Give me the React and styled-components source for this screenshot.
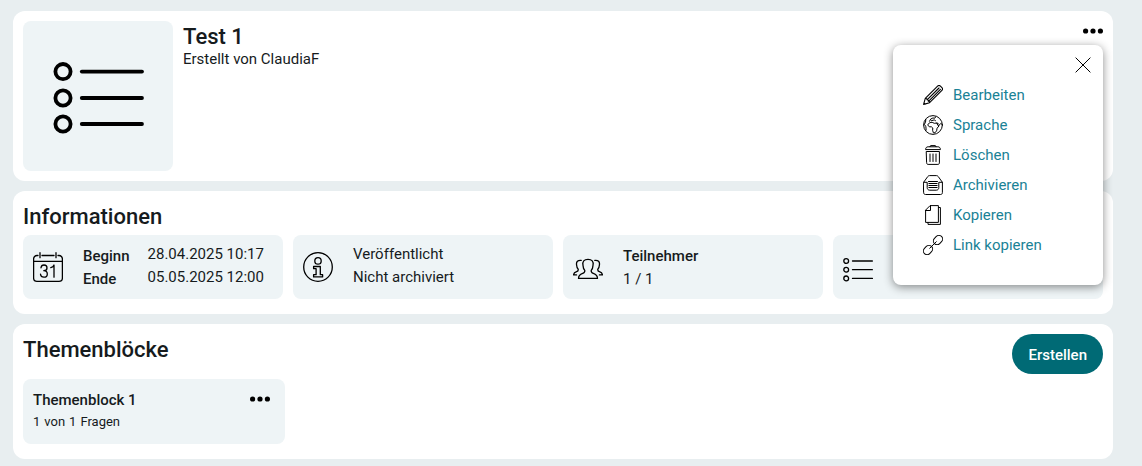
import styled, { createGlobalStyle } from "styled-components";

const GlobalStyle = createGlobalStyle`
  * {
    box-sizing: border-box;
  }

  body {
    margin: 0;
    background: #e8eef0;
    color: #161b1d;
    font-family: Roboto, "Liberation Sans", sans-serif;
    font-size: 15px;
    line-height: 23px;
  }

  svg {
    display: block;
    flex-shrink: 0;
    color: #000;
  }
`;

const Page = styled.main`
  display: flex;
  flex-direction: column;
  gap: 10px;
  padding: 11px 29px 7px 13px;
`;

const Card = styled.section`
  position: relative;
  display: flex;
  flex-direction: ${({ $column }) => ($column ? "column" : "row")};
  gap: ${({ $gap }) => $gap || 0}px;
  padding: 10px 10px ${({ $bottom }) => $bottom || 10}px;
  border-radius: 12px;
  background: #fff;
`;

const Tile = styled.div`
  display: flex;
  border-radius: 8px;
  background: #eef4f6;
`;

const Cover = styled(Tile)`
  width: 150px;
  height: 150px;
`;

const Heading = styled.div`
  flex: 1;
`;

const Title = styled.h1`
  margin: 0;
  font-size: 22px;
  font-weight: 500;
  line-height: 32px;
`;

const Author = styled.p`
  margin: 0;
  line-height: 12px;
`;

const SectionTitle = styled.h2`
  margin: 0;
  font-size: 22px;
  font-weight: 500;
  line-height: 32px;
`;

const IconButton = styled.button`
  display: flex;
  align-self: flex-start;
  padding: 0;
  border: 0;
  background: none;
  cursor: pointer;
`;

const Menu = styled.nav`
  position: absolute;
  z-index: 1;
  top: 34px;
  right: 10px;
  display: flex;
  flex-direction: column;
  width: 210px;
  padding: 12px 12px 25px;
  border-radius: 8px;
  background: #fff;
  box-shadow: 0 2px 10px rgba(0, 0, 0, 0.45);

  ${IconButton} {
    align-self: flex-end;
  }
`;

const MenuList = styled.ul`
  margin: 7px 0 0;
  padding: 0 18px;
  list-style: none;
`;

const MenuLink = styled.a`
  display: flex;
  align-items: center;
  gap: 10px;
  height: 30px;
  color: #1a8296;
  text-decoration: none;
`;

const InfoRow = styled.div`
  display: flex;
  gap: 10px;
`;

const InfoTile = styled(Tile)`
  flex: ${({ $grow }) => ($grow ? "1" : "0 0 260px")};
  align-items: center;
  gap: 20px;
  height: 64px;
  padding: 0 10px;
`;

const Columns = styled.div`
  display: flex;
  gap: 18px;
`;

const Lines = styled.div`
  display: flex;
  flex-direction: column;
  padding: ${({ $raised }) => ($raised ? "0 0 2px" : "2px 0 0")};
`;

const Label = styled.span`
  font-weight: 500;
`;

const SectionHead = styled.div`
  display: flex;
  align-items: flex-start;
  justify-content: space-between;
`;

const CreateButton = styled.button`
  height: 40px;
  padding: 2px 16px 0;
  border: 0;
  border-radius: 20px;
  background: #006a75;
  color: #fff;
  font-family: inherit;
  font-size: 15px;
  font-weight: 500;
  cursor: pointer;
`;

const BlockTile = styled(Tile)`
  justify-content: space-between;
  width: 262px;
  height: 65px;
  padding: 10px 15px 10px 10px;

  ${IconButton} {
    margin-top: 7px;
  }
`;

const BlockTitle = styled.h3`
  margin: 0;
  font-size: 15px;
  font-weight: 500;
  line-height: 22px;
`;

const BlockMeta = styled.p`
  display: flex;
  gap: 4px;
  margin: 0;
  font-size: 13px;
  line-height: 22px;
`;

const Icon = ({ size = 20, stroke = 1, children }) => (
  <svg
    width={size}
    height={size}
    viewBox={`0 0 ${size} ${size}`}
    fill="none"
    stroke="currentColor"
    strokeWidth={stroke}
    strokeLinecap="round"
    strokeLinejoin="round"
    aria-hidden="true"
  >
    {children}
  </svg>
);

const DotsIcon = ({ height = 6 }) => (
  <svg
    width="20"
    height={height}
    viewBox={`0 0 20 ${height}`}
    fill="currentColor"
    aria-hidden="true"
  >
    {[2.6, 10, 17.4].map((x) => (
      <circle key={x} cx={x} cy={height / 2} r="2.6" />
    ))}
  </svg>
);

const CoverIcon = () => (
  <Icon size={150} stroke={3.8}>
    {[50.6, 77, 103].map((y) => (
      <g key={y}>
        <circle cx="40" cy={y} r="7.6" />
        <path d={`M58.8 ${y}H119`} />
      </g>
    ))}
  </Icon>
);

const ListIcon = () => (
  <Icon size={30} stroke={1.3}>
    {[9, 17.7, 26.4].map((y) => (
      <g key={y}>
        <circle cx="3.2" cy={y} r="2.4" />
        <path d={`M9.5 ${y}H29.4`} />
      </g>
    ))}
  </Icon>
);

const CalendarIcon = () => (
  <Icon size={30} stroke={1.3}>
    <path d="M5 3.5H4a3.4 3.4 0 0 0-3.4 3.4v19A3.4 3.4 0 0 0 4 29.3h22a3.4 3.4 0 0 0 3.4-3.4v-19A3.4 3.4 0 0 0 26 3.5h-1M9 3.5h12M7 .7v5M23 .7v5M.6 9.3h28.8" />
    <path d="M8 15.800c.2-1.800 1.400-2.800 3-2.800 1.800 0 3 1.100 3 2.900s-1.200 2.800-3.200 2.800c2.200 0 3.500 1.200 3.500 3.200s-1.400 3.300-3.400 3.300c-1.900 0-3.200-1.100-3.400-3M17.800 15.700c1.700-.5 2.700-1.300 3.200-2.700v12.200" />
  </Icon>
);

const InfoIcon = () => (
  <Icon size={30} stroke={1.3}>
    <circle cx="15" cy="15" r="14.3" />
    <circle cx="15" cy="8.9" r="3.2" />
    <path d="M10.600 14.500h6.700v8.200h2.300v2.200h-9v-2.200h2.500v-6h-2.500z" />
  </Icon>
);

const PeopleIcon = () => (
  <Icon size={30} stroke={1.3}>
    <path d="M5.500 26.400h19c0-3-1-4-4.200-5-1.600-.5-2.300-1.200-2.100-3 1.200-1.200 1.700-2.800 1.800-5 .9-4-1.200-6.100-5-6.100s-5.900 2.100-5 6.100c.1 2.200.6 3.800 1.800 5 .2 1.800-.5 2.500-2.100 3-3.200 1-4.200 2-4.200 5z" />
    <path d="M8.200 8.400C4.900 8 3 9.700 3.600 13c.1 1.900.6 3.200 1.600 4.200.2 1.500-.3 2.100-1.600 2.500C1.400 20.400.6 21 .6 22.900h3M21.800 8.400c3.300-.4 5.200 1.300 4.600 4.600-.1 1.900-.6 3.200-1.600 4.200-.2 1.500.3 2.100 1.600 2.500 2.200.7 3 1.300 3 3.200h-3" />
  </Icon>
);

const CloseIcon = () => (
  <Icon size={16}>
    <path d="M.9.9l14.200 14.200M15.100.9L.9 15.100" />
  </Icon>
);

const PencilIcon = () => (
  <Icon stroke={1.1}>
    <path d="M.6 19.400l1.700-6L14.600 1.100c.8-.8 2-.8 2.800 0l1.500 1.500c.8.8.8 2 0 2.800L6.600 17.700zM2.300 13.400c1.100-.2 1.800.5 1.700 1.400 1-.1 1.500.5 1.300 1.400.9-.1 1.400.5 1.300 1.500M4.800 14.200L16 3M6.200 15.600L17.400 4.400M.8 18l1.400 1.200" />
  </Icon>
);

const GlobeIcon = () => (
  <Icon>
    <circle cx="10" cy="10" r="9.4" />
    <path d="M5.600 8.600c.8-1 2-1.300 3.600-1.200l2.200.9 2.300-.3 1.300 2.600 1.200.1-2.100 2.500-.5 2.600-1.600 2h-1.600l-.8-2.500.2-2.300-1.400-1.200H6.300L5 10.300z" />
    <path d="M6.500 6.300l1.200-2.300 2.200-1 1.900.2.900-1.400M8.300 5.800l2.900-.9 1.300.8M13.700 8l1.300.3 1.400 1.500 1.400-1.200 1.400.8M2.800 4.500l-.3 2.800-1.100 2 1.500 2.400.2 3.400" />
  </Icon>
);

const TrashIcon = () => (
  <Icon>
    <path d="M3.600 6.500h12.800v11.400c0 .9-.6 1.500-1.500 1.500H5.100c-.9 0-1.500-.6-1.500-1.500zM2.600 4.200c0-1.500 1-2.400 2.500-2.400h9.800c1.500 0 2.500.9 2.500 2.400zM7 1.700L7.600.6h4.800l.6 1.100M7 9v7.500M10 9v7.500M13 9v7.500" />
  </Icon>
);

const ArchiveIcon = () => (
  <Icon>
    <path d="M.6 7.300L4.800 1.500c.5-.6 1-.9 1.800-.9h6.800c.8 0 1.300.3 1.800.9l4.200 5.800v10.300c0 1.200-.7 1.900-1.900 1.900h-15c-1.200 0-1.900-.7-1.900-1.900zM.6 7.300h3.600v5.300c0 1.500 1 2.600 2.500 2.600h6.600c1.500 0 2.500-1.100 2.500-2.600V7.300h3.600M5.500 6.500h9M5.900 8.500h8.200M5.900 10.500h8.200M5.900 12.500h8.200" />
  </Icon>
);

const CopyIcon = () => (
  <Icon>
    <path d="M7.500.6h7.900v16.800H2.600V5.500zM7.500.6v4.900H2.600M15.400 2.500h2v16.900H5v-2" />
  </Icon>
);

const LinkIcon = () => (
  <Icon>
    <rect x="-5" y="-3.700" width="10" height="7.400" rx="3.700" transform="translate(15 5) rotate(-45)" />
    <rect x="-5" y="-3.700" width="10" height="7.400" rx="3.700" transform="translate(5 15) rotate(-45)" />
    <path d="M6.700 13.300l6.600-6.600" />
  </Icon>
);

const menuItems = [
  { label: "Bearbeiten", icon: <PencilIcon /> },
  { label: "Sprache", icon: <GlobeIcon /> },
  { label: "Löschen", icon: <TrashIcon /> },
  { label: "Archivieren", icon: <ArchiveIcon /> },
  { label: "Kopieren", icon: <CopyIcon /> },
  { label: "Link kopieren", icon: <LinkIcon /> },
];

const HeaderCard = () => (
  <Card $gap={10}>
    <Cover>
      <CoverIcon />
    </Cover>
    <Heading>
      <Title>Test 1</Title>
      <Author>Erstellt von ClaudiaF</Author>
    </Heading>
    <IconButton type="button" aria-label="Optionen">
      <DotsIcon height={20} />
    </IconButton>
    <Menu>
      <IconButton type="button" aria-label="Schließen">
        <CloseIcon />
      </IconButton>
      <MenuList>
        {menuItems.map(({ label, icon }) => (
          <li key={label}>
            <MenuLink href="#">
              {icon}
              {label}
            </MenuLink>
          </li>
        ))}
      </MenuList>
    </Menu>
  </Card>
);

const InfoCard = () => (
  <Card $column $gap={2} $bottom={15}>
    <SectionTitle>Informationen</SectionTitle>
    <InfoRow>
      <InfoTile>
        <CalendarIcon />
        <Columns>
          <Lines>
            <Label>Beginn</Label>
            <Label>Ende</Label>
          </Lines>
          <Lines $raised>
            <span>28.04.2025 10:17</span>
            <span>05.05.2025 12:00</span>
          </Lines>
        </Columns>
      </InfoTile>
      <InfoTile>
        <InfoIcon />
        <Lines $raised>
          <span>Veröffentlicht</span>
          <span>Nicht archiviert</span>
        </Lines>
      </InfoTile>
      <InfoTile>
        <PeopleIcon />
        <Lines>
          <Label>Teilnehmer</Label>
          <span>1 / 1</span>
        </Lines>
      </InfoTile>
      <InfoTile $grow>
        <ListIcon />
      </InfoTile>
    </InfoRow>
  </Card>
);

const BlocksCard = () => (
  <Card $column $gap={5} $bottom={15}>
    <SectionHead>
      <SectionTitle>Themenblöcke</SectionTitle>
      <CreateButton type="button">Erstellen</CreateButton>
    </SectionHead>
    <BlockTile>
      <div>
        <BlockTitle>Themenblock 1</BlockTitle>
        <BlockMeta>
          <span>1</span>
          <span>von</span>
          <span>1</span>
          <span>Fragen</span>
        </BlockMeta>
      </div>
      <IconButton type="button" aria-label="Optionen Themenblock 1">
        <DotsIcon />
      </IconButton>
    </BlockTile>
  </Card>
);

export default function App() {
  return (
    <>
      <GlobalStyle />
      <Page>
        <HeaderCard />
        <InfoCard />
        <BlocksCard />
      </Page>
    </>
  );
}
